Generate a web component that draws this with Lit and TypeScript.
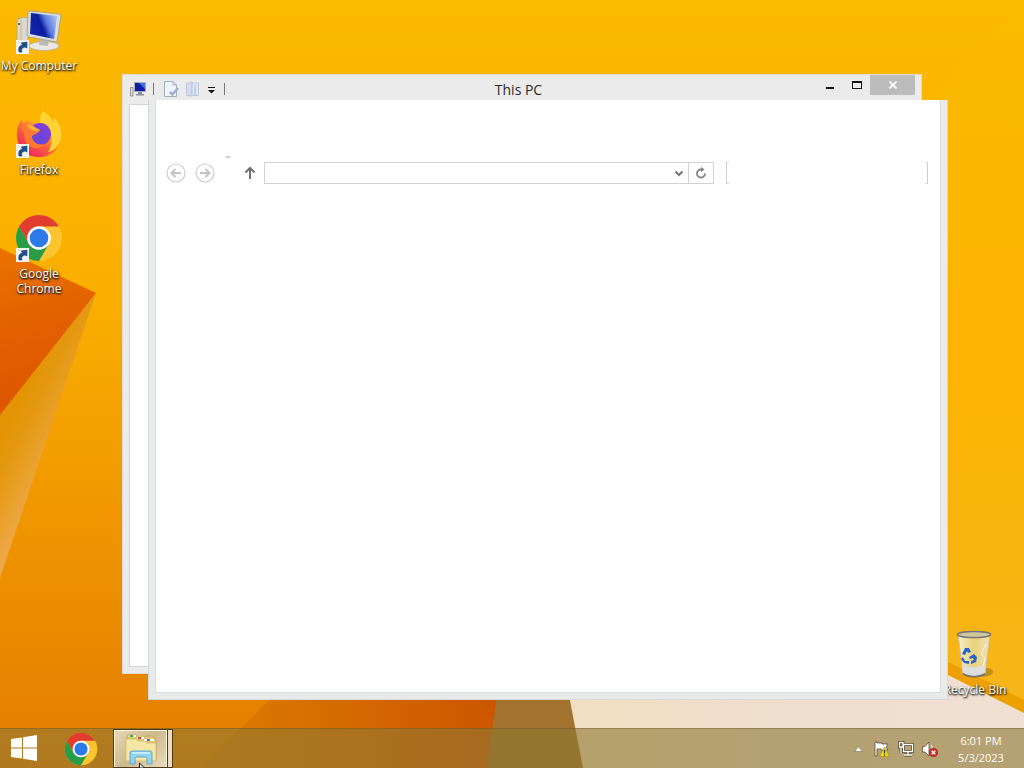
import { LitElement, html, css, svg } from "lit";
import { customElement, property } from "lit/decorators.js";

const shortcutArrow = svg`
  <rect x="1" y="34" width="13" height="14" fill="#f4f4ee"/>
  <path d="M4 46C3 41 5 39 8 39L6 37L12 36L12 42L10 41C7 42 6 43 7 46Z" fill="#1d4f8f" stroke="#163f76" stroke-width=".6"/>`;

const chromeShape = svg`
  <circle cx="24" cy="24" r="23" fill="#fbc531"/>
  <path d="M4.1 12.5A23 23 0 0 1 43.9 12.5L24 12.5L14 29.8Z" fill="#e23c2e"/>
  <path d="M4.1 12.5A23 23 0 0 0 24 47L34 29.8L14 29.8Z" fill="#289c47"/>
  <circle cx="24" cy="24" r="11.8" fill="#fff"/>
  <circle cx="24" cy="24" r="9.3" fill="#2c79e8"/>`;

const art: Record<string, unknown> = {
  computer: svg`
    <defs>
      <linearGradient id="scr" x1="0" y1=".7" x2="1" y2=".3">
        <stop offset="0" stop-color="#1226a8"/><stop offset=".45" stop-color="#0c1ea0"/>
        <stop offset=".65" stop-color="#5b7be0"/><stop offset="1" stop-color="#a8bcf2"/>
      </linearGradient>
    </defs>
    <path d="M2 14L8 11L13 12L13 34L6 37L2 34Z" fill="#dcd8cc" stroke="#a8a18c" stroke-width=".7"/>
    <path d="M6 14L6 36" stroke="#b5ae9a" stroke-width=".8"/>
    <circle cx="4" cy="18" r="1.1" fill="#555"/>
    <ellipse cx="29" cy="40" rx="15" ry="4.5" fill="#e9e8e4" stroke="#a9a799" stroke-width=".7"/>
    <path d="M25 32L34 34L33 40L24 39Z" fill="#bab9b4"/>
    <path d="M15 5L44 8Q46 8 46 10L42 36L14 31Q12 30 12 29L13 7Q13 5 15 5Z" fill="#dcdcda" stroke="#9b9a90" stroke-width=".8"/>
    <path d="M16 7L42 10L39 33L15 28Z" fill="url(#scr)"/>${shortcutArrow}`,
  firefox: svg`
    <defs>
      <linearGradient id="ff" x1=".85" y1="0" x2=".15" y2=".9">
        <stop offset="0" stop-color="#ffe838"/><stop offset=".35" stop-color="#ffb428"/>
        <stop offset=".65" stop-color="#ff603a"/><stop offset="1" stop-color="#e62464"/>
      </linearGradient>
      <linearGradient id="ffp" x1="1" y1="0" x2="0" y2="1">
        <stop offset="0" stop-color="#8a3fd8"/><stop offset="1" stop-color="#5a48d8"/>
      </linearGradient>
    </defs>
    <path d="M28 1C34 5 37 9 38 13C39 11 39 9 39 8C44 13 47 20 46 27C45 40 35 47 24 47C11 47 2 38 2 25C2 18 4 13 7 9L8 14L12 10C15 12 17 13 20 13L26 12C25 7 26 4 28 1Z" fill="url(#ff)"/>
    <path d="M28 1C34 5 37 9 38 13C39 11 39 9 39 8C45 13 47 22 46 28C44 37 37 42 33 42C38 36 38 24 34 18L25 12C25 7 26 4 28 1Z" fill="#ffd335"/>
    <circle cx="25" cy="24" r="11" fill="url(#ffp)"/>
    <path d="M5 17C12 13 18 15 21 18L25 20C24 23 20 24 17 26C17 32 23 36 29 34C25 41 13 39 10 30C9 25 10 21 5 17Z" fill="#ff7a30"/>
    <path d="M11 15C15 14 19 16 21 18L25 20C22 22 18 21 15 19Z" fill="#ffae3a"/>${shortcutArrow}`,
  chrome: svg`${chromeShape}${shortcutArrow}`,
  bin: svg`
    <defs>
      <linearGradient id="bn" x1="0" x2="1">
        <stop offset="0" stop-color="#f5f3df" stop-opacity=".95"/><stop offset=".5" stop-color="#e7d58a" stop-opacity=".85"/>
        <stop offset="1" stop-color="#eee8c5" stop-opacity=".95"/>
      </linearGradient>
    </defs>
    <ellipse cx="30" cy="42" rx="12" ry="5" fill="#8a6a16" opacity=".5"/>
    <path d="M7 4L12 44Q23 49 34 44L39 4Z" fill="url(#bn)" stroke="#c5bea3" stroke-width=".8"/>
    <path d="M11 35L12 44Q23 49 34 44L35 35Q23 39 11 35Z" fill="#dcdedb"/>
    <path d="M12 43Q23 49 34 43L34 45Q23 50 12 45Z" fill="#6f6f70"/>
    <ellipse cx="23" cy="4.500" rx="16.500" ry="3" fill="#cfc7a0" stroke="#77756f" stroke-width="1.500"/>
    <path d="M11 24L14 18L18 18L20 22L17 23L16 21L14 25ZM18 27L23 24L26 27L25 32L20 34L20 31L23 30L22 28L19 29ZM12 27L14 31L18 31L18 34L13 33L10 29Z" fill="#2a62cc"/>
    <path d="M35 14L30 24L34 28L32 36" fill="none" stroke="#fff" stroke-width="1" opacity=".7"/>`,
};

const base = css`
  * { box-sizing: border-box; }
  button { font: inherit; color: inherit; border: 0; padding: 0; margin: 0; background: none; }
  svg { display: block; }
`;

@customElement("desktop-icon")
class DesktopIcon extends LitElement {
  @property() kind = "";
  @property() label = "";
  static styles = [base, css`
    :host { display: block; width: 78px; }
    .icon { display: flex; flex-direction: column; align-items: center; gap: 4px; width: 100%; }
    .label {
      font: 12px/15px "Open Sans", "Noto Sans", sans-serif; color: #fff; text-align: center;
      text-shadow: 0 1px 2px #000, 1px 1px 2px rgba(0, 0, 0, .7);
    }
  `];
  render() {
    return html`<button class="icon">
      <svg width="48" height="48" viewBox="0 0 48 48" aria-hidden="true">${art[this.kind]}</svg>
      <span class="label">${this.label}</span>
    </button>`;
  }
}

@customElement("desk-wallpaper")
class DeskWallpaper extends LitElement {
  static styles = [base, css`
    :host { display: block; }
    .art { width: 100%; height: 100%; }
  `];
  render() {
    return html`<svg class="art" viewBox="0 0 1024 768" preserveAspectRatio="none" aria-hidden="true">
      <defs>
        <linearGradient id="sky" x1="0" y1="0" x2="0" y2="1">
          <stop offset="0" stop-color="#fcba00"/><stop offset=".4" stop-color="#faae00"/>
          <stop offset=".65" stop-color="#f09800"/><stop offset="1" stop-color="#e47c00"/>
        </linearGradient>
        <linearGradient id="right" x1="0" y1="0" x2="0" y2="1">
          <stop offset="0" stop-color="#fcba00"/><stop offset=".5" stop-color="#fbb400"/><stop offset="1" stop-color="#f7b51c"/>
        </linearGradient>
        <linearGradient id="tri" x1="0" y1="250" x2="40" y2="390" gradientUnits="userSpaceOnUse">
          <stop offset="0" stop-color="#ea7200"/><stop offset=".6" stop-color="#e26000"/><stop offset="1" stop-color="#dc5800"/>
        </linearGradient>
        <linearGradient id="fold" x1="0" y1="440" x2="50" y2="465" gradientUnits="userSpaceOnUse">
          <stop offset="0" stop-color="#e29404"/><stop offset=".5" stop-color="#e69c1c"/><stop offset="1" stop-color="#eda746"/>
        </linearGradient>
        <linearGradient id="deep" x1="240" y1="0" x2="500" y2="0" gradientUnits="userSpaceOnUse">
          <stop offset="0" stop-color="#dc7800"/><stop offset="1" stop-color="#cc5600"/>
        </linearGradient>
        <linearGradient id="sand" x1="570" y1="0" x2="1024" y2="0" gradientUnits="userSpaceOnUse">
          <stop offset="0" stop-color="#f2dfc2"/><stop offset=".5" stop-color="#eedfcf"/><stop offset="1" stop-color="#f0e0d4"/>
        </linearGradient>
      </defs>
      <rect width="1024" height="768" fill="url(#sky)"/>
      <path d="M930 100L1024 0V728L930 680Z" fill="url(#right)"/>
      <path d="M0 415L96 293L0 578Z" fill="url(#fold)"/>
      <path d="M0 248L96 293L0 415Z" fill="url(#tri)"/>
      <path d="M200 768L300 670H510L492 768Z" fill="url(#deep)"/>
      <path d="M499 680H566L590 768H487Z" fill="#a1732f"/>
      <path d="M566 680L940 668L1024 712V768H583Z" fill="url(#sand)"/>
      <path d="M940 658L1024 700V713L940 671Z" fill="#eda000"/>
    </svg>`;
  }
}

@customElement("pc-window")
class PcWindow extends LitElement {
  static styles = [base, css`
    :host { display: flex; flex-direction: column; background: #ebebeb; border: 1px solid #dedcd6; padding: 0 6px 6px; }
    .titlebar { display: grid; grid-template-columns: 1fr auto 1fr; align-items: start; height: 29px; margin-left: -7px; }
    .quick { display: flex; align-items: center; gap: 6px; height: 28px; padding-left: 8px; }
    .sep { width: 1px; height: 12px; background: #777; margin: 0 3px 0 1px; }
    .title { margin: 0; font: 14px/29px "Open Sans", "Noto Sans", sans-serif; color: #2a2a2a; }
    .caption { display: flex; justify-content: flex-end; }
    .caption button { width: 27px; height: 20px; display: grid; place-items: center; }
    .caption .close { width: 45px; background: #bcbcbc; }
    .client { flex: 1; background: #fff; border: 1px solid #d4d4d4; }
  `];
  render() {
    return html`
      <header class="titlebar">
        <div class="quick">
          <svg width="16" height="16" viewBox="0 0 16 16" aria-hidden="true">
            <path d="M.5 6.500H3V15H.5Z" fill="#ddd" stroke="#777" stroke-width=".7"/>
            <rect x="4.500" y="1.500" width="11" height="9" fill="#0c1fa8" stroke="#a9adb8"/>
            <path d="M9 2H15V8Z" fill="#4b6ce0"/><path d="M8 11H12V13H14V14.500H6V13H8Z" fill="#8b8f99"/>
          </svg>
          <span class="sep"></span>
          <button aria-label="Properties"><svg width="16" height="16" viewBox="0 0 16 16">
            <path d="M1.500 .5H10L13.500 4V15.500H1.500Z" fill="#f1f5fb" stroke="#a3aebd"/>
            <path d="M10 .5V4H13.500" fill="none" stroke="#a3aebd"/>
            <path d="M7 11L9.500 13.500L15 7" fill="none" stroke="#9fb0c8" stroke-width="2.500"/>
          </svg></button>
          <button aria-label="New folder"><svg width="16" height="16" viewBox="0 0 16 16">
            <path d="M1.500 2.500L7 1V15L1.500 14.500Z" fill="#d3dced" stroke="#bcc8dc"/>
            <path d="M7 2H13.500V14.500H7Z" fill="#dfe7f3" stroke="#bcc8dc"/><path d="M9 4H11V14H9Z" fill="#c2cfe4"/>
          </svg></button>
          <button aria-label="Customize Quick Access Toolbar"><svg width="10" height="16" viewBox="0 0 10 16">
            <path d="M1 6H8V7H1ZM1 9H8L4.500 12.500Z" fill="#111"/>
          </svg></button>
          <span class="sep"></span>
        </div>
        <h1 class="title">This PC</h1>
        <div class="caption">
          <button aria-label="Minimize"><svg width="10" height="10" viewBox="0 0 10 10"><path d="M1 7H9V9H1Z" fill="#111"/></svg></button>
          <button aria-label="Maximize"><svg width="10" height="10" viewBox="0 0 10 10"><path d="M0 1H10V9H0ZM1 3V8H9V3Z" fill="#111" fill-rule="evenodd"/></svg></button>
          <button class="close" aria-label="Close"><svg width="8" height="8" viewBox="0 0 8 8"><path d="M.5 .5L7.500 7.500M7.500 .5L.5 7.500" stroke="#fff" stroke-width="1.600"/></svg></button>
        </div>
      </header>
      <div class="client"></div>`;
  }
}

@customElement("blank-window")
class BlankWindow extends LitElement {
  static styles = [base, css`
    :host { display: block; background: #e9ebeb; border: solid #d6d8d8; border-width: 0 1px 1px; padding: 0 6px 6px; }
    .client { height: 100%; background: #fff; border: solid #dcdfdf; border-width: 0 1px 1px; padding: 62px 12px 0 10px; }
    .nav { display: flex; align-items: center; height: 22px; }
    .round { margin-right: 9px; }
    .recent { align-self: flex-start; margin: -7px 12px 0 0; }
    .up { margin-right: 8px; }
    .address { flex: 1; display: flex; height: 22px; min-width: 0; border: 1px solid #d2d2d2; }
    input { border: 0; outline: 0; background: none; padding: 0 4px; font: 12px "Open Sans", sans-serif; min-width: 0; }
    .path { flex: 1; }
    .address button { width: 18px; display: grid; place-items: center; }
    .address .refresh { width: 25px; border-left: 1px solid #d2d2d2; }
    .search {
      width: 202px; height: 22px; margin-left: 12px; border: solid #cecece; border-width: 0 1px;
      background: linear-gradient(90deg, #ddd 2px, transparent 2px calc(100% - 2px), #ddd calc(100% - 2px)) top / 100% 1px no-repeat,
        linear-gradient(90deg, #ddd 2px, transparent 2px calc(100% - 2px), #ddd calc(100% - 2px)) bottom / 100% 1px no-repeat;
    }
  `];
  render() {
    const round = (d: string) => html`<svg width="20" height="20" viewBox="0 0 20 20">
      <circle cx="10" cy="10" r="9" fill="none" stroke="#ccc" stroke-width="1.200"/>
      <path d=${d} fill="none" stroke="#c4c4c4" stroke-width="2"/></svg>`;
    return html`<div class="client"><div class="nav">
      <button class="round" aria-label="Back">${round("M15 10H6M9.500 6L5.500 10L9.500 14")}</button>
      <button class="round" aria-label="Forward">${round("M5 10H14M10.500 6L14.500 10L10.500 14")}</button>
      <button class="recent" aria-label="Recent locations"><svg width="8" height="5" viewBox="0 0 8 5"><path d="M1 1H7L4 4Z" fill="#ccc"/></svg></button>
      <button class="up" aria-label="Up"><svg width="12" height="14" viewBox="0 0 12 14"><path d="M6 13V2M1.500 6.500L6 2L10.500 6.500" fill="none" stroke="#707070" stroke-width="2"/></svg></button>
      <div class="address">
        <input class="path" aria-label="Address">
        <button aria-label="Previous locations"><svg width="10" height="8" viewBox="0 0 10 8"><path d="M1.500 2.500L5 6L8.500 2.500" fill="none" stroke="#777" stroke-width="2"/></svg></button>
        <button class="refresh" aria-label="Refresh"><svg width="12" height="12" viewBox="0 0 12 12"><path d="M7 2.500H6A4 4 0 1 0 10 6.500" fill="none" stroke="#808080" stroke-width="1.800"/><path d="M6 0L9.500 2.500L6 5Z" fill="#808080"/></svg></button>
      </div>
      <input class="search" type="search" aria-label="Search">
    </div></div>`;
  }
}

@customElement("task-bar")
class TaskBar extends LitElement {
  static styles = [base, css`
    :host {
      display: flex; height: 40px; background: rgba(142, 120, 52, .6); border-top: 1px solid rgba(90, 75, 30, .35);
      font: 11px/17px "Open Sans", "Noto Sans", sans-serif; color: #fff;
    }
    .launch { width: 48px; display: grid; place-items: center; }
    .pinned { width: 66px; display: grid; place-items: center; }
    .running { display: flex; width: 60px; margin-left: -1px; border: 1px solid #4f3c16; background: #fbf4de; }
    .face {
      flex: 1; display: grid; place-items: center; margin: 1px; height: 36px;
      background: linear-gradient(135deg, #e6d7b4, #cdb98c 50%, #e9dcbe);
    }
    .stack { width: 5px; height: 100%; border-left: 1px solid #4f3c16; background: #ecdfc0; }
    .tray { display: flex; align-items: center; gap: 8px; margin-left: auto; padding-right: 17px; }
    .tray button { display: grid; place-items: center; height: 100%; }
    .more { margin-right: 3px; }
    .clock { text-align: center; width: 52px; margin-left: 9px; }
    time { display: block; }
  `];
  render() {
    return html`
      <button class="launch" aria-label="Start"><svg width="28" height="28" viewBox="0 0 28 28">
        <path d="M1 4L12 2.400V12.400H1ZM13 2.200L27 0V12.400H13ZM1 13.500H12V23.600L1 22ZM13 13.500H27V26L13 23.800Z" fill="#fff"/></svg></button>
      <button class="pinned" aria-label="Google Chrome"><svg width="34" height="34" viewBox="0 0 48 48">${chromeShape}</svg></button>
      <button class="running" aria-label="File Explorer">
        <span class="face"><svg width="34" height="32" viewBox="0 0 34 32">
          <path d="M3 4Q3 2 5 2H12L14 5H20L22 3H28L32 7V27H3Z" fill="#e3c775" stroke="#c09d4b" stroke-width=".7"/>
          <path d="M5 2H12V4H5Z" fill="#fff"/><path d="M6 2H9V4H6Z" fill="#25a847"/>
          <path d="M13 4H20V6H13Z" fill="#fff"/><path d="M14 4H17V6H14Z" fill="#ba5427"/>
          <path d="M20 6H30V8H20Z" fill="#fff"/><path d="M23 6H26V8H23Z" fill="#3478d0"/>
          <path d="M2 6H12L14 8H21L23 10H32V28H2Z" fill="#f5e6a6" stroke="#d1b662" stroke-width=".7"/>
          <path d="M6 20Q6 18 8 18H26Q28 18 28 20V31H23V26Q23 24 21 24H13Q11 24 11 26V31H6Z" fill="#8ed3ef" stroke="#4a9fc9" stroke-width=".8"/>
          <path d="M8 20H26" stroke="#d9f3fd" stroke-width="1.500"/>
        </svg></span>
        <span class="stack"></span>
      </button>
      <div class="tray">
        <button class="more" aria-label="Show hidden icons"><svg width="9" height="6" viewBox="0 0 9 6"><path d="M4.500 .5L8.500 5.500H.5Z" fill="#fff" stroke="#6b5a32" stroke-width=".5"/></svg></button>
        <button aria-label="Action Center"><svg width="16" height="16" viewBox="0 0 16 16">
          <path d="M1 1H3V2H8V3H14L12 6L14 9H7V8H3V15H1Z" fill="#fff" stroke="#4a3c24" stroke-width=".7"/>
          <path d="M10.500 6L15.500 15.500H5.500Z" fill="#f1db16" stroke="#9c8a14" stroke-width=".6"/><path d="M10.500 9V12.500M10.500 13.500V14.700" stroke="#333" stroke-width="1.200"/>
        </svg></button>
        <button aria-label="Network"><svg width="16" height="16" viewBox="0 0 16 16">
          <g fill="none" stroke="#50422c" stroke-width="2.800"><path d="M5.500 3.500H14.500V10.500H5.500ZM10 11V14M6 14H14M1.500 1.500H5V6H1.500ZM3 6V12"/></g>
          <g fill="none" stroke="#fff" stroke-width="1.300"><path d="M5.500 3.500H14.500V10.500H5.500ZM10 11V14M6 14H14M1.500 1.500H5V6H1.500ZM3 6V12"/></g>
        </svg></button>
        <button aria-label="Volume"><svg width="16" height="16" viewBox="0 0 16 16">
          <path d="M.5 5.500H3L7 1V15L3 11H.5Z" fill="#fff" stroke="#4a3c24" stroke-width=".7"/>
          <path d="M9 4Q11 6 10 9" fill="none" stroke="#fff"/>
          <circle cx="11.500" cy="11.500" r="4.300" fill="#cf2a22" stroke="#8e1914" stroke-width=".5"/>
          <path d="M9.700 9.700L13.300 13.300M13.300 9.700L9.700 13.300" stroke="#fff" stroke-width="1.400"/>
        </svg></button>
        <div class="clock"><time>6:01 PM</time><time>5/3/2023</time></div>
      </div>`;
  }
}

@customElement("app-root")
class AppRoot extends LitElement {
  static styles = [base, css`
    :host { display: grid; grid-template: 1fr auto / 1fr; height: 100vh; overflow: hidden; }
    .wallpaper { grid-area: 1 / 1 / 3 / 2; min-height: 0; height: 100vh; }
    .desktop { grid-area: 1 / 1; position: relative; min-height: 0; }
    .taskbar { grid-area: 2 / 1; position: relative; }
    .icons { display: grid; grid-auto-rows: 104px; width: 78px; padding-top: 6px; }
    .recycle { position: absolute; right: 10px; bottom: 31px; }
    .back { position: absolute; inset: 74px 102px 54px 122px; }
    .front { position: absolute; inset: 100px 76px 28px 148px; }
    .cursor { position: absolute; left: 139px; bottom: 0; }
  `];
  render() {
    return html`
      <desk-wallpaper class="wallpaper"></desk-wallpaper>
      <main class="desktop">
        <div class="icons">
          <desktop-icon kind="computer" label="My Computer"></desktop-icon>
          <desktop-icon kind="firefox" label="Firefox"></desktop-icon>
          <desktop-icon kind="chrome" label="Google Chrome"></desktop-icon>
        </div>
        <desktop-icon class="recycle" kind="bin" label="Recycle Bin"></desktop-icon>
        <pc-window class="back"></pc-window>
        <blank-window class="front"></blank-window>
      </main>
      <task-bar class="taskbar"></task-bar>
      <svg class="cursor" width="6" height="5" viewBox="0 0 6 5" aria-hidden="true"><path d="M.5 0L5.500 5H.5Z" fill="#fff" stroke="#111"/></svg>`;
  }
}
